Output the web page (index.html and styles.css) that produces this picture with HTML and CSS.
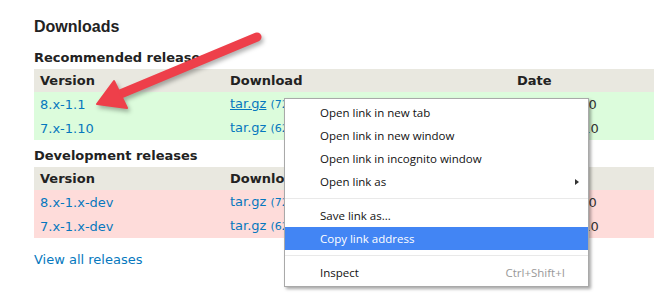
FILE: index.html
```html
<!DOCTYPE html>
<html lang="en">
<head>
    <meta charset="UTF-8">
    <meta name="viewport" content="width=device-width, initial-scale=1.0">
    <title>Downloads</title>
    <link rel="stylesheet" href="styles.css">
</head>
<body>
    <div class="page">
        <h2 class="title">Downloads</h2>

        <h3 class="section">Recommended releases</h3>
        <table class="releases">
            <tr class="head"><th class="c-ver">Version</th><th class="c-dl">Download</th><th>Date</th></tr>
            <tr class="ok">
                <td><a href="#">8.x-1.1</a></td>
                <td><a href="#" class="hover">tar.gz</a> <span class="size">(72.48 KB)</span> | <a href="#">zip</a> <span class="size">(93.61 KB)</span></td>
                <td>2016-Jan-10</td>
            </tr>
            <tr class="ok">
                <td><a href="#">7.x-1.10</a></td>
                <td><a href="#">tar.gz</a> <span class="size">(62.15 KB)</span> | <a href="#">zip</a> <span class="size">(80.02 KB)</span></td>
                <td>2015-Oct-10</td>
            </tr>
        </table>

        <h3 class="section dev">Development releases</h3>
        <table class="releases">
            <tr class="head"><th class="c-ver">Version</th><th class="c-dl">Download</th><th>Date</th></tr>
            <tr class="bad">
                <td><a href="#">8.x-1.x-dev</a></td>
                <td><a href="#">tar.gz</a> <span class="size">(72.52 KB)</span> | <a href="#">zip</a> <span class="size">(93.70 KB)</span></td>
                <td>2016-Jan-10</td>
            </tr>
            <tr class="bad">
                <td><a href="#">7.x-1.x-dev</a></td>
                <td><a href="#">tar.gz</a> <span class="size">(62.19 KB)</span> | <a href="#">zip</a> <span class="size">(80.11 KB)</span></td>
                <td>2015-Oct-10</td>
            </tr>
        </table>

        <a href="#" class="all">View all releases</a>
    </div>

    <ul class="menu">
        <li class="item">Open link in new tab</li>
        <li class="item">Open link in new window</li>
        <li class="item">Open link in incognito window</li>
        <li class="item">Open link as <span class="sub"></span></li>
        <li class="sep"></li>
        <li class="item">Save link as...</li>
        <li class="item active">Copy link address</li>
        <li class="sep"></li>
        <li class="item">Inspect <span class="key">Ctrl+Shift+I</span></li>
    </ul>

    <svg class="arrow" width="662" height="308" viewBox="0 0 662 308">
        <line x1="257" y1="37" x2="118" y2="95" stroke="#ee3f4a" stroke-width="9" stroke-linecap="round"/>
        <polygon points="97,104 114,81 127,108" fill="#ee3f4a" stroke="#ee3f4a" stroke-width="2" stroke-linejoin="round"/>
    </svg>
</body>
</html>
```

FILE: styles.css
```css
body {
    margin: 0;
    background: #fff;
    color: #333;
    font-family: "DejaVu Sans", Verdana, sans-serif;
    font-size: 13px;
    line-height: 17px;
    overflow: hidden;
}
a {
    color: #0678be;
    text-decoration: none;
}
.page {
    padding: 17px 0 0 34px;
}
.title {
    margin: 0 0 12px;
    font-family: "Liberation Sans", Arial, sans-serif;
    font-size: 16px;
    line-height: 20px;
    font-weight: bold;
    color: #222;
}
.section {
    margin: 0 0 3px;
    font-size: 13px;
    line-height: 17px;
    font-weight: bold;
    color: #222;
}
.section.dev {
    margin-top: 7px;
}
.releases {
    width: 620px;
    border-collapse: collapse;
    white-space: nowrap;
}
.releases th,
.releases td {
    padding: 0 6px;
    text-align: left;
    vertical-align: middle;
}
.releases th {
    height: 23px;
    background: #e9e8e0;
    color: #222;
}
.releases td {
    height: 24px;
}
.c-ver {
    width: 178px;
}
.c-dl {
    width: 275px;
}
.ok td {
    background: #dcfcdc;
}
.bad td {
    background: #fedcda;
}
.size {
    font-size: 11px;
    color: #0678be;
}
.hover {
    text-decoration: underline;
}
.all {
    display: inline-block;
    margin-top: 13px;
}

.menu {
    position: absolute;
    left: 284px;
    top: 98px;
    width: 303px;
    margin: 0;
    padding: 2px 0;
    list-style: none;
    background: #fff;
    border: 1px solid #a9a9a9;
    box-shadow: 2px 2px 3px rgba(0, 0, 0, 0.35);
    font-family: "Open Sans", "Noto Sans", sans-serif;
    font-size: 11.5px;
    color: #111;
}
.item {
    display: flex;
    align-items: center;
    height: 23px;
    padding: 0 23px 0 35px;
}
.item.active {
    background: #4285f4;
    color: #fff;
}
.key {
    margin-left: auto;
    color: #999;
}
.sub {
    margin-left: auto;
    margin-right: -14px;
    width: 0;
    height: 0;
    border-top: 3.5px solid transparent;
    border-bottom: 3.5px solid transparent;
    border-left: 4px solid #333;
}
.sep {
    height: 1px;
    margin: 5px 0;
    background: #e9e9e9;
}

.arrow {
    position: absolute;
    left: 0;
    top: 0;
    pointer-events: none;
    filter: drop-shadow(2px 3px 2px rgba(0, 0, 0, 0.3));
}
```
